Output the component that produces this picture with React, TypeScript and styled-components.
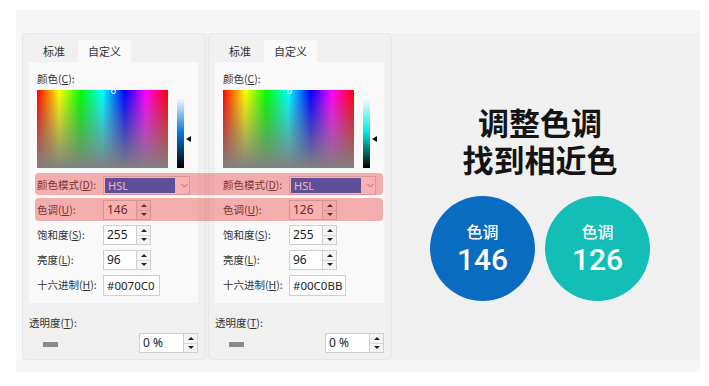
import React from "react";
import styled, { createGlobalStyle } from "styled-components";

const Global = createGlobalStyle`
  html, body { margin: 0; padding: 0; background: #ffffff; }
  body { font-family: "Noto Sans CJK SC", "Noto Sans", sans-serif; color: #222; }
`;

const Frame = styled.div`
  margin: 10px 9px 0 16px;
  height: 362px;
  box-sizing: border-box;
  padding: 23px 0 12px 6px;
  background: #f7f7f7;
`;

const Stage = styled.div`
  height: 327px;
  display: flex;
  background: #f0f0f0;
`;

const DialogPair = styled.div`
  position: relative;
  display: flex;
  gap: 2px;
`;

const Dialog = styled.div`
  width: 184px;
  height: 327px;
  box-sizing: border-box;
  border: 1px solid #e6e6e6;
  border-radius: 6px;
  padding: 6px 7px 0 6px;
  display: flex;
  flex-direction: column;
`;

const TabBar = styled.div`
  display: flex;
  gap: 2px;
  height: 22px;
  padding-left: 3px;
`;

const Tab = styled.div<{ $active?: boolean }>`
  padding: 0 ${(p) => (p.$active ? 10 : 11)}px;
  font-size: 11px;
  line-height: 22px;
  color: #333;
  background: ${(p) => (p.$active ? "#f9f9f9" : "transparent")};
  border-radius: 3px 3px 0 0;
`;

const Content = styled.div`
  height: 241px;
  box-sizing: border-box;
  background: #f9f9f9;
  padding: 10px 8px 0 8px;
  display: flex;
  flex-direction: column;
`;

const Label = styled.div`
  font-size: 10.5px;
  line-height: 14px;
  color: #333;
  white-space: nowrap;
  u { text-decoration: underline; text-underline-offset: 1px; }
`;

const ColorArea = styled.div`
  display: flex;
  margin-top: 4px;
  height: 78px;
`;

const Spectrum = styled.div`
  position: relative;
  width: 131px;
  height: 78px;
  background:
    linear-gradient(to bottom, rgba(128,128,128,0) 0%, rgba(128,128,128,1) 100%),
    linear-gradient(to right, #ff0000 0%, #ffff00 17%, #00ff00 33%, #00ffff 50%, #0000ff 67%, #ff00ff 83%, #ff0000 100%);
`;

const Marker = styled.div`
  position: absolute;
  top: -1px;
  width: 5px;
  height: 5px;
  margin-left: -2px;
  border-radius: 50%;
  border: 1px solid #ffffff;
  box-sizing: border-box;
`;

const LumWrap = styled.div`
  position: relative;
  margin: 7px 0 0 9px;
  width: 7px;
  height: 71px;
`;

const LumBar = styled.div<{ $c: string }>`
  width: 7px;
  height: 71px;
  background: linear-gradient(to bottom, #ffffff 0%, ${(p) => p.$c} 50%, #000000 100%);
`;

const LumArrow = styled.div`
  position: absolute;
  left: 9px;
  top: 39px;
  width: 0;
  height: 0;
  border-top: 3px solid transparent;
  border-bottom: 3px solid transparent;
  border-right: 5px solid #111;
`;

const Fields = styled.div`
  margin-top: 7px;
  display: flex;
  flex-direction: column;
  gap: 5px;
`;

const Row = styled.div`
  display: flex;
  align-items: center;
  height: 20px;
  & > ${Label} { width: 66px; }
`;

const Combo = styled.div`
  width: 87px;
  height: 19px;
  box-sizing: border-box;
  border: 1px solid #d6d6d6;
  background: #ffffff;
  display: flex;
  align-items: center;
  padding-left: 1px;
`;

const ComboValue = styled.div`
  width: 70px;
  height: 15px;
  background: #0a62d8;
  color: #ffffff;
  font-family: "Noto Sans", sans-serif;
  font-size: 11px;
  line-height: 15px;
  padding-left: 3px;
  box-sizing: border-box;
`;

const ComboArrow = styled.svg`
  margin-left: 6px;
`;

const Spin = styled.div`
  display: flex;
  height: 20px;
`;

const Field = styled.div<{ $w: number }>`
  width: ${(p) => p.$w}px;
  box-sizing: border-box;
  height: 100%;
  background: #ffffff;
  border: 1px solid #cfcfcf;
  font-family: "Noto Sans", sans-serif;
  font-size: 12px;
  line-height: 18px;
  padding-left: 3px;
  color: #222;
`;

const SpinButtons = styled.div`
  width: 14px;
  display: flex;
  flex-direction: column;
  border: 1px solid #cfcfcf;
  border-left: none;
  box-sizing: border-box;
  background: #f4f4f4;
`;

const SpinHalf = styled.div<{ $up?: boolean }>`
  flex: 1;
  display: flex;
  align-items: center;
  justify-content: center;
  border-bottom: ${(p) => (p.$up ? "1px solid #d8d8d8" : "none")};
  &::after {
    content: "";
    width: 0;
    height: 0;
    border-left: 3px solid transparent;
    border-right: 3px solid transparent;
    ${(p) => (p.$up ? "border-bottom: 3px solid #222;" : "border-top: 3px solid #222;")}
  }
`;

const HexField = styled(Field)`
  height: 21px;
  line-height: 19px;
  font-size: 11.5px;
`;

const Transparency = styled.div`
  margin-top: 13px;
  display: flex;
  flex-direction: column;
`;

const TransRow = styled.div`
  margin-top: 3px;
  display: flex;
  align-items: center;
  justify-content: space-between;
  padding-left: 14px;
  height: 20px;
`;

const Swatch = styled.div`
  width: 15px;
  height: 5px;
  background: #8a8a8a;
  margin-top: 2px;
`;

const Band = styled.div<{ $top: number; $h: number }>`
  position: absolute;
  left: 13px;
  width: 348px;
  top: ${(p) => p.$top}px;
  height: ${(p) => p.$h}px;
  border-radius: 4px;
  background: rgba(235, 50, 50, 0.38);
  pointer-events: none;
`;

const Side = styled.div`
  flex: 1;
  padding: 70px 12px 0 0;
  display: flex;
  flex-direction: column;
  align-items: center;
`;

const TitleLine = styled.div`
  font-size: 31px;
  line-height: 37px;
  height: 37px;
  font-weight: 700;
  color: #141414;
  text-align: center;
  white-space: nowrap;
`;

const Circles = styled.div`
  margin-top: 19px;
  display: flex;
  gap: 10px;
`;

const Circle = styled.div<{ $bg: string }>`
  width: 105px;
  height: 105px;
  border-radius: 50%;
  background: ${(p) => p.$bg};
  color: #ffffff;
  display: flex;
  flex-direction: column;
  align-items: center;
  justify-content: center;
`;

const CircleLabel = styled.div`
  font-size: 16px;
  line-height: 22px;
  font-weight: 500;
`;

const CircleNum = styled.div`
  font-family: Roboto, "Noto Sans", sans-serif;
  font-size: 30px;
  line-height: 36px;
  font-weight: 500;
`;

const SpinBox = ({ value, w = 34 }: { value: string; w?: number }) => (
  <Spin>
    <Field $w={w}>{value}</Field>
    <SpinButtons>
      <SpinHalf $up />
      <SpinHalf />
    </SpinButtons>
  </Spin>
);

type D = { hue: number; hex: string; lum: string };

const ColorDialog = ({ d }: { d: D }) => (
  <Dialog>
    <TabBar>
      <Tab>标准</Tab>
      <Tab $active>自定义</Tab>
    </TabBar>
    <Content>
      <Label>
        颜色(<u>C</u>):
      </Label>
      <ColorArea>
        <Spectrum>
          <Marker style={{ left: `${(d.hue / 240) * 125}px` }} />
        </Spectrum>
        <LumWrap>
          <LumBar $c={d.lum} />
          <LumArrow />
        </LumWrap>
      </ColorArea>
      <Fields>
        <Row>
          <Label>
            颜色模式(<u>D</u>):
          </Label>
          <Combo>
            <ComboValue>HSL</ComboValue>
            <ComboArrow width="7" height="5" viewBox="0 0 7 5">
              <path d="M0.5 1 L3.5 4 L6.5 1" fill="none" stroke="#888" strokeWidth="1" />
            </ComboArrow>
          </Combo>
        </Row>
        <Row>
          <Label>
            色调(<u>U</u>):
          </Label>
          <SpinBox value={String(d.hue)} />
        </Row>
        <Row>
          <Label>
            饱和度(<u>S</u>):
          </Label>
          <SpinBox value="255" />
        </Row>
        <Row>
          <Label>
            亮度(<u>L</u>):
          </Label>
          <SpinBox value="96" />
        </Row>
        <Row>
          <Label>
            十六进制(<u>H</u>):
          </Label>
          <HexField $w={57}>{d.hex}</HexField>
        </Row>
      </Fields>
    </Content>
    <Transparency>
      <Label>
        透明度(<u>T</u>):
      </Label>
      <TransRow>
        <Swatch />
        <SpinBox value="0 %" w={45} />
      </TransRow>
    </Transparency>
  </Dialog>
);

const dialogs: D[] = [
  { hue: 146, hex: "#0070C0", lum: "#0a78d8" },
  { hue: 126, hex: "#00C0BB", lum: "#00e8e0" },
];

export default function App() {
  return (
    <>
      <Global />
      <Frame>
        <Stage>
          <DialogPair>
            {dialogs.map((d) => (
              <ColorDialog key={d.hue} d={d} />
            ))}
            <Band $top={140} $h={22} />
            <Band $top={165} $h={23} />
          </DialogPair>
          <Side>
            <TitleLine>调整色调</TitleLine>
            <TitleLine>找到相近色</TitleLine>
            <Circles>
              <Circle $bg="#0a6cc0">
                <CircleLabel>色调</CircleLabel>
                <CircleNum>146</CircleNum>
              </Circle>
              <Circle $bg="#12beb6">
                <CircleLabel>色调</CircleLabel>
                <CircleNum>126</CircleNum>
              </Circle>
            </Circles>
          </Side>
        </Stage>
      </Frame>
    </>
  );
}
